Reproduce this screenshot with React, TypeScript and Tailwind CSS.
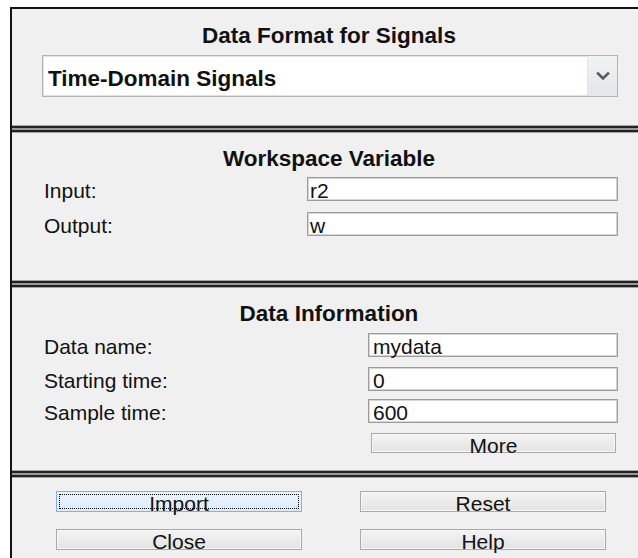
import React from "react";

const font = { fontFamily: '"Liberation Sans", Arial, sans-serif' };

function Divider() {
  return (
    <div className="border-y border-[#a6a6a6]">
      <div className="h-[6px] border-y-2 border-[#222222] bg-[#999999]" />
    </div>
  );
}

function Heading({ children }: { children: React.ReactNode }) {
  return (
    <div className="text-center text-[22.5px] font-bold leading-[25px] text-[#111]">
      {children}
    </div>
  );
}

function Field({
  label,
  value,
  width,
  pad,
}: {
  label: string;
  value: string;
  width: string;
  pad: string;
}) {
  return (
    <div className="flex items-start pl-[32px] pr-[28px]">
      <div className="h-[24px] flex-1 pt-[3px] text-[21px] leading-[22px] text-[#111]">
        {label}
      </div>
      <div
        className={`h-[24px] ${width} ${pad} border border-[#9c9c9c] bg-white pt-[2px] text-[21px] leading-[22px] text-[#111] shadow-[inset_0_0_0_1px_#d6d6d6]`}
      >
        {value}
      </div>
    </div>
  );
}

function Button({
  label,
  focused,
  h,
}: {
  label: string;
  focused?: boolean;
  h: string;
}) {
  const base = `${h} w-[246px] border text-center text-[21px] leading-[23px] text-[#111] overflow-visible`;
  if (focused) {
    return (
      <div
        className={`${base} border-[#7fb2e5] bg-gradient-to-b from-[#ecf4fc] to-[#dcecfc] outline-1 outline-dotted outline-black outline-offset-[-4px]`}
      >
        {label}
      </div>
    );
  }
  return (
    <div
      className={`${base} border-[#a9a9a9] bg-gradient-to-b from-[#f4f4f4] to-[#e3e3e3] shadow-[inset_0_0_0_1px_#f7f7f7]`}
    >
      {label}
    </div>
  );
}

export default function App() {
  return (
    <div className="w-[638px] h-[558px] overflow-hidden bg-white" style={font}>
      <div className="ml-[10px] mt-[7px] h-[560px] w-[638px] border-x-2 border-t-2 border-[#141414] bg-[#f0f0f0] flex flex-col">
        {/* Signal format */}
        <div className="pt-[14px] pb-[28px]">
          <Heading>Data Format for Signals</Heading>
          <div className="ml-[30px] mt-[7px] flex h-[42px] w-[576px] border border-[#b3b3b3] bg-white shadow-[inset_0_0_0_1px_#e2e2e2]">
            <div className="flex flex-1 items-center pl-[5px] pt-[5px] text-[22.5px] font-bold leading-[25px] text-[#111]">
              Time-Domain Signals
            </div>
            <div className="flex w-[30px] items-center justify-center border-l border-[#e3e3e3] bg-gradient-to-b from-[#f1f3f5] to-[#e3e6ea]">
              <svg width="14" height="10" viewBox="0 0 14 10">
                <path
                  d="M2 2.5 L7 7.5 L12 2.5"
                  fill="none"
                  stroke="#5a5a5a"
                  strokeWidth="2.6"
                  strokeLinecap="square"
                />
              </svg>
            </div>
          </div>
        </div>

        <Divider />

        {/* Workspace variables */}
        <div className="pt-[13px] pb-[44px]">
          <Heading>Workspace Variable</Heading>
          <div className="mt-[6px] flex flex-col gap-[11px]">
            <Field label="Input:" value="r2" width="w-[311px]" pad="pl-[2px]" />
            <Field label="Output:" value="w" width="w-[311px]" pad="pl-[2px]" />
          </div>
        </div>

        <Divider />

        {/* Data information */}
        <div className="pt-[13px] pb-[17px]">
          <Heading>Data Information</Heading>
          <div className="mt-[7px] flex flex-col">
            <Field label="Data name:" value="mydata" width="w-[250px]" pad="pl-[4px]" />
            <div className="h-[10px]" />
            <Field label="Starting time:" value="0" width="w-[250px]" pad="pl-[4px]" />
            <div className="h-[8px]" />
            <Field label="Sample time:" value="600" width="w-[250px]" pad="pl-[4px]" />
          </div>
          <div className="mt-[10px] flex justify-end pr-[30px]">
            <div className="h-[20px] w-[245px] border border-[#a9a9a9] bg-gradient-to-b from-[#f4f4f4] to-[#e3e3e3] text-center text-[21px] leading-[23px] text-[#111] shadow-[inset_0_0_0_1px_#f7f7f7]">
              More
            </div>
          </div>
        </div>

        <Divider />

        {/* Actions */}
        <div className="flex justify-between pl-[44px] pr-[40px] pt-[13px]">
          <div className="flex flex-col gap-[17px]">
            <Button label="Import" focused h="h-[21px]" />
            <Button label="Close" h="h-[21px]" />
          </div>
          <div className="flex flex-col gap-[17px]">
            <Button label="Reset" h="h-[21px]" />
            <Button label="Help" h="h-[21px]" />
          </div>
        </div>
      </div>
    </div>
  );
}
